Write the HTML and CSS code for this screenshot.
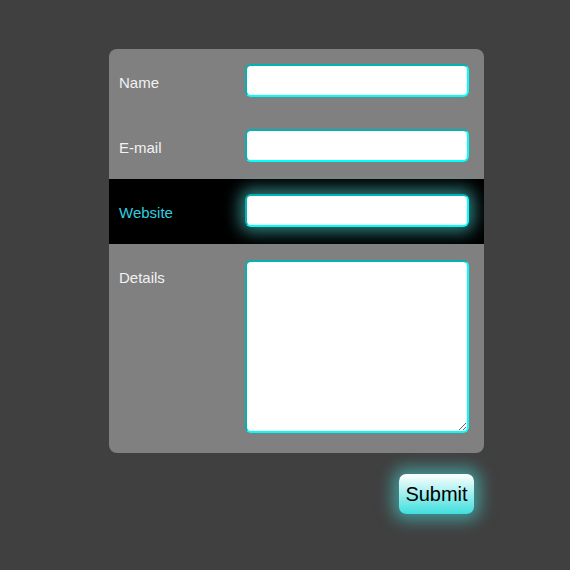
FILE: index.html
```html
<!DOCTYPE html>
<html>
<head>
<meta charset="utf-8">
<link rel="stylesheet" href="styles.css">
</head>
<body>
<div class="wrap">
  <form class="form">
    <div class="row">
      <label class="label" for="name">Name</label>
      <input class="field" id="name" type="text">
    </div>
    <div class="row">
      <label class="label" for="email">E-mail</label>
      <input class="field" id="email" type="text">
    </div>
    <div class="row active">
      <label class="label" for="website">Website</label>
      <input class="field" id="website" type="text" autofocus>
    </div>
    <div class="row last">
      <label class="label" for="details">Details</label>
      <textarea class="field area" id="details"></textarea>
    </div>
  </form>
  <div class="actions">
    <button class="submit" type="button">Submit</button>
  </div>
</div>
</body>
</html>
```
FILE: styles.css
```css
html, body {
  margin: 0;
  padding: 0;
  background: #404040;
  font-family: "Liberation Sans", Arial, sans-serif;
  min-height: 570px;
}
.wrap {
  width: 375px;
  padding: 49px 0 40px 109px;
}
.form {
  background: #808080;
  border-radius: 8px;
  overflow: hidden;
  display: flex;
  flex-direction: column;
  margin: 0;
}
.row {
  display: flex;
  padding: 16px 15px 16px 10px;
  height: 33px;
}
.row.last {
  height: 173px;
  padding-bottom: 20px;
}
.label {
  width: 126px;
  color: #f2f2f2;
  font-size: 15px;
  line-height: 17px;
  padding-top: 9px;
}
.field {
  box-sizing: border-box;
  width: 224px;
  height: 33px;
  margin: -1px 0 0 0;
  padding: 0 10px;
  border: 2px solid;
  border-color: #00b4b4 #00ffff #00ffff #00b4b4;
  border-radius: 6px;
  background: #fff;
  outline: none;
  font-family: "Liberation Sans", Arial, sans-serif;
  font-size: 15px;
  caret-color: #000;
}
.area {
  height: 173px;
  margin-top: 0;
  resize: both;
  padding: 6px 10px;
}
.row.active {
  background: #000;
}
.row.active .label {
  color: #2ed0e0;
}
.row.active .field {
  box-shadow: 0 0 16px 5px rgba(80, 210, 210, 0.6);
}
.actions {
  display: flex;
  justify-content: flex-end;
  padding: 21px 10px 0 0;
}
.submit {
  width: 75px;
  height: 40px;
  border: none;
  border-radius: 7px;
  background: linear-gradient(#ffffff, #3fdede);
  color: #000;
  font-family: "Liberation Sans", Arial, sans-serif;
  font-size: 20px;
  padding: 0;
  box-shadow: 0 0 16px 6px rgba(70, 210, 210, 0.6);
}
```
